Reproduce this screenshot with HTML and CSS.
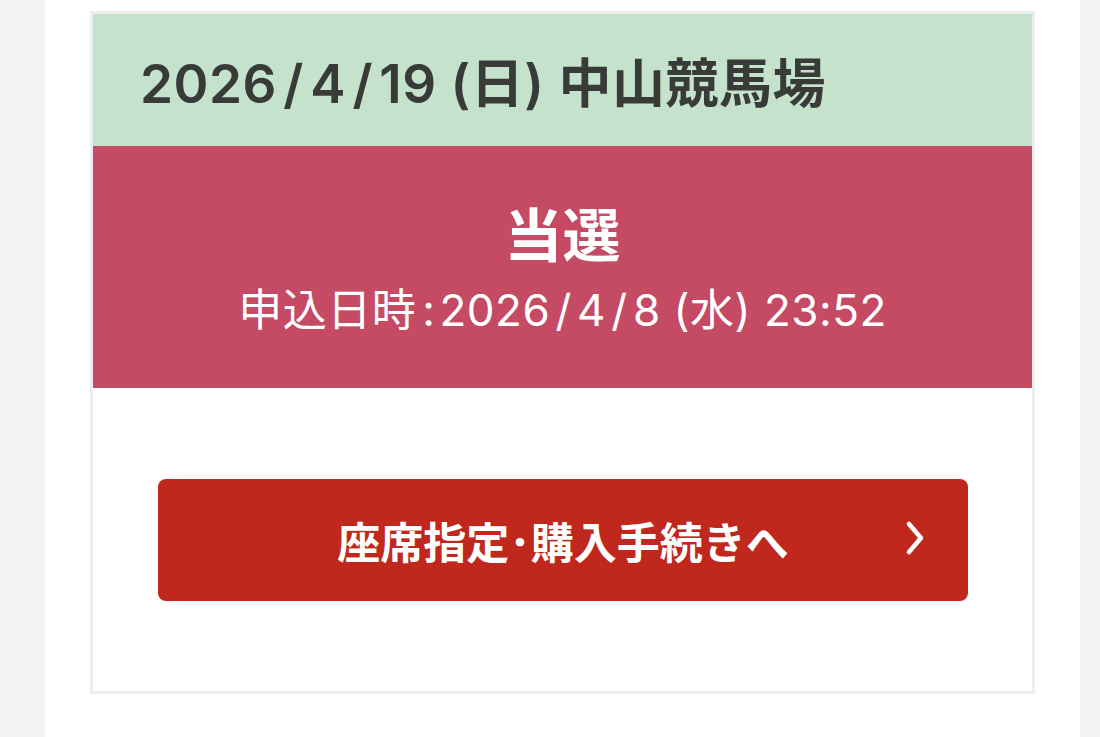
FILE: index.html
```html
<!DOCTYPE html>
<html lang="ja">

<head>
    <meta charset="UTF-8">
    <title>抽選結果</title>
    <link rel="stylesheet" href="styles.css">
</head>

<body>
    <div class="page">
        <div class="card">
            <div class="race-head">
                <h2>2026<span class="sl">/</span>4<span class="sl">/</span>19 (日) 中山競馬場</h2>
            </div>
            <div class="result">
                <p class="result-label">当選</p>
                <p class="result-date">申込日時<span class="colon">:</span>2026<span class="sl">/</span>4<span class="sl">/</span>8 (水) 23:52</p>
            </div>
            <div class="actions">
                <a href="#" class="btn-buy">
                    <span>座席指定<span class="dot">･</span>購入手続きへ</span>
                    <svg class="chevron" width="22" height="36" viewBox="0 0 22 36">
                        <polyline points="5,4 17,18 5,32" fill="none" stroke="#fff" stroke-width="4.5" stroke-linecap="round" stroke-linejoin="round" />
                    </svg>
                </a>
            </div>
        </div>
    </div>
</body>

</html>
```

FILE: styles.css
```css
* {
    box-sizing: border-box;
    font-family: Inter, "Noto Sans CJK JP", sans-serif;
}

body {
    margin: 0;
    background-color: #f2f2f2;
}

.page {
    width: 1035px;
    min-height: 737px;
    margin-left: 45px;
    padding: 11px 45px 0;
    background-color: #fff;
}

.card {
    border: 3px solid #ededed;
}

/* date + course */
.race-head {
    height: 132px;
    display: flex;
    align-items: center;
    padding-left: 47px;
    background-color: #c4e2cc;
}

.race-head h2 {
    margin: 0;
    font-size: 53px;
    font-weight: 600;
    letter-spacing: 0.5px;
    color: #383b38;
}

.sl {
    margin: 0 0.12em;
}

/* lottery result */
.result {
    height: 242px;
    padding-top: 55px;
    background-color: #c54a63;
    color: #fff;
    text-align: center;
}

.result p {
    margin: 0;
}

.result-label {
    font-size: 58px;
    font-weight: bold;
    line-height: 70px;
}

.result-date {
    margin-top: 9px !important;
    font-size: 44px;
    line-height: 60px;
    letter-spacing: 0.5px;
}

.result-date .colon {
    margin: 0 4px 0 6px;
}

.actions {
    padding: 91px 64px 90px 65px;
}

.btn-buy {
    position: relative;
    display: flex;
    align-items: center;
    justify-content: center;
    height: 122px;
    border-radius: 8px;
    background-color: #c0281e;
    color: #fff;
    text-decoration: none;
    font-size: 43px;
    font-weight: bold;
}

.chevron {
    position: absolute;
    right: 42px;
    top: 41px;
}
```
